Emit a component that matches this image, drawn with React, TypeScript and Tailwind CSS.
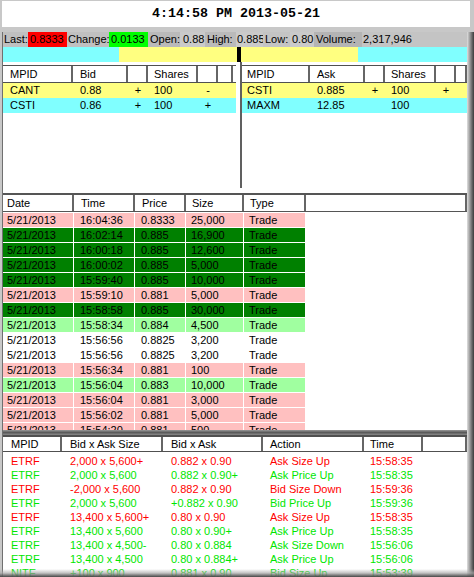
import React from "react";

// Level 1 / book / time & sales / level 2 monitor window

const PINK = "bg-[#ffc0c0]";
const DKGREEN = "bg-[#008000]";
const LTGREEN = "bg-[#a0ffa0]";
const WHITE = "bg-white";

const QUOTE = [
  { t: "Last:", w: "w-[25px]", bg: "bg-[#c0c0c0]", pl: "pl-[1px]" },
  { t: "0.8333", w: "w-[39px]", bg: "bg-[#ff0000]", pl: "pl-[2px]" },
  { t: "Change:", w: "w-[42px]", bg: "bg-[#c0c0c0]", pl: "pl-[1px]" },
  { t: "0.0133", w: "w-[39px]", bg: "bg-[#00ff00]", pl: "pl-[2px]" },
  { t: "Open:", w: "w-[32px]", bg: "bg-[#bababa]", pl: "pl-[2px]" },
  { t: "0.88", w: "w-[25px]", bg: "bg-[#cacaca]", pl: "pl-[3px]" },
  { t: "High:", w: "w-[31px]", bg: "bg-[#bababa]", pl: "pl-[2px]" },
  { t: "0.885", w: "w-[27px]", bg: "bg-[#cacaca]", pl: "pl-[1px]" },
  { t: "Low:", w: "w-[27px]", bg: "bg-[#c4c4c4]", pl: "pl-[2px]" },
  { t: "0.80", w: "w-[24px]", bg: "bg-[#cacaca]", pl: "pl-[2px]" },
  { t: "Volume:", w: "w-[48px]", bg: "bg-[#b4b4b4]", pl: "pl-[2px]" },
  { t: "2,317,946", w: "flex-1", bg: "bg-[#c4c4c4]", pl: "pl-[1px]" },
];

type BookRow = { mpid: string; price: string; a: string; shares: string; b: string; bg: string };

const BIDS: BookRow[] = [
  { mpid: "CANT", price: "0.88", a: "+", shares: "100", b: "-", bg: "bg-[#ffff80]" },
  { mpid: "CSTI", price: "0.86", a: "+", shares: "100", b: "+", bg: "bg-[#80ffff]" },
];

const ASKS: BookRow[] = [
  { mpid: "CSTI", price: "0.885", a: "+", shares: "100", b: "+", bg: "bg-[#ffff80]" },
  { mpid: "MAXM", price: "12.85", a: "", shares: "100", b: "", bg: "bg-[#80ffff]" },
];

const TRADES = [
  { time: "16:04:36", price: "0.8333", size: "25,000", bg: PINK },
  { time: "16:02:14", price: "0.885", size: "16,900", bg: DKGREEN },
  { time: "16:00:18", price: "0.885", size: "12,600", bg: DKGREEN },
  { time: "16:00:02", price: "0.885", size: "5,000", bg: DKGREEN },
  { time: "15:59:40", price: "0.885", size: "10,000", bg: DKGREEN },
  { time: "15:59:10", price: "0.881", size: "5,000", bg: PINK },
  { time: "15:58:58", price: "0.885", size: "30,000", bg: DKGREEN },
  { time: "15:58:34", price: "0.884", size: "4,500", bg: LTGREEN },
  { time: "15:56:56", price: "0.8825", size: "3,200", bg: WHITE },
  { time: "15:56:56", price: "0.8825", size: "3,200", bg: WHITE },
  { time: "15:56:34", price: "0.881", size: "100", bg: PINK },
  { time: "15:56:04", price: "0.883", size: "10,000", bg: LTGREEN },
  { time: "15:56:04", price: "0.881", size: "3,000", bg: PINK },
  { time: "15:56:02", price: "0.881", size: "5,000", bg: PINK },
  { time: "15:54:20", price: "0.881", size: "500", bg: PINK },
];

const RED = "text-[#ff0000]";
const GRN = "text-[#00e600]";

const LEVEL2 = [
  { c: RED, id: "ETRF", size: "2,000 x 5,600+", px: "0.882 x 0.90", act: "Ask Size Up", t: "15:58:35" },
  { c: GRN, id: "ETRF", size: "2,000 x 5,600", px: "0.882 x 0.90+", act: "Ask Price Up", t: "15:58:35" },
  { c: RED, id: "ETRF", size: "-2,000 x 5,600", px: "0.882 x 0.90", act: "Bid Size Down", t: "15:59:36" },
  { c: GRN, id: "ETRF", size: "2,000 x 5,600", px: "+0.882 x 0.90", act: "Bid Price Up", t: "15:59:36" },
  { c: RED, id: "ETRF", size: "13,400 x 5,600+", px: "0.80 x 0.90", act: "Ask Size Up", t: "15:58:35" },
  { c: GRN, id: "ETRF", size: "13,400 x 5,600", px: "0.80 x 0.90+", act: "Ask Price Up", t: "15:58:35" },
  { c: GRN, id: "ETRF", size: "13,400 x 4,500-", px: "0.80 x 0.884", act: "Ask Size Down", t: "15:56:06" },
  { c: GRN, id: "ETRF", size: "13,400 x 4,500", px: "0.80 x 0.884+", act: "Ask Price Up", t: "15:56:06" },
  { c: GRN, id: "NITE", size: "+100 x 900", px: "0.881 x 0.90", act: "Bid Size Up", t: "15:53:39" },
];

function Head({ children, className = "" }: { children?: React.ReactNode; className?: string }) {
  return (
    <div className={`flex items-center border-r-2 border-[#666666] overflow-hidden whitespace-nowrap ${className}`}>
      {children}
    </div>
  );
}

function BookPanel({ title, rows, cols, first }: { title: string; rows: BookRow[]; cols: string; first: string }) {
  return (
    <div className="h-full flex flex-col">
      <div className={`grid ${cols} h-[18px] border-y border-[#505050]`}>
        <Head className={first}>MPID</Head>
        <Head className="pl-[7px]">{title}</Head>
        <Head />
        <Head className="pl-[6px]">Shares</Head>
        <Head />
        <Head />
      </div>
      {rows.map((r, i) => (
        <div key={i} className={`grid ${cols} h-[15px] items-center ${r.bg}`}>
          <div className={first}>{r.mpid}</div>
          <div className="pl-[7px]">{r.price}</div>
          <div className="text-center">{r.a}</div>
          <div className="pl-[6px]">{r.shares}</div>
          <div className="text-center">{r.b}</div>
          <div />
        </div>
      ))}
    </div>
  );
}

export default function App() {
  return (
    <div className="relative w-[474px] h-[577px] overflow-hidden bg-[#c8c8c8] text-[11px] leading-none text-black font-['Liberation_Sans',Arial,sans-serif]">
      {/* clock */}
      <div className="ml-[2px] mr-[4px] mt-[1px] h-[26px] bg-white flex items-center justify-center font-['Liberation_Mono','Courier_New',monospace] font-bold text-[13.33px]">
        4:14:58 PM 2013-05-21
      </div>
      <div className="h-[5px]" />

      <div className="flex h-[545px]">
        <div className="w-[2px]" />
        <div className="flex-1 min-w-0 flex flex-col border-l border-[#707070] bg-white overflow-hidden">
          {/* quote bar */}
          <div className="flex h-[15px] shrink-0">
            {QUOTE.map((q, i) => (
              <div key={i} className={`flex items-center whitespace-nowrap ${q.w} ${q.bg} ${q.pl}`}>
                {q.t}
              </div>
            ))}
          </div>

          {/* bid / ask pressure bar */}
          <div className="flex h-[15px] shrink-0">
            <div className="w-[116px] bg-[#80ffff]" />
            <div className="w-[118px] bg-[#ffff80]" />
            <div className="w-[4px] bg-black" />
            <div className="w-[117px] bg-[#ffff80]" />
            <div className="flex-1 bg-[#80ffff]" />
          </div>

          {/* order book */}
          <div className="flex h-[131px] shrink-0 pb-[5px]">
            <div className="w-[237px] pt-[3px] pr-[4px]">
              <BookPanel
                title="Bid"
                rows={BIDS}
                cols="grid-cols-[70px_55px_20px_50px_20px_15px]"
                first="pl-[7px]"
              />
            </div>
            <div className="flex-1 border-l-2 border-[#606060] pt-[3px]">
              <BookPanel
                title="Ask"
                rows={ASKS}
                cols="grid-cols-[68px_55px_20px_51px_20px_11px]"
                first="pl-[5px]"
              />
            </div>
          </div>

          {/* time & sales */}
          <div className="flex flex-col h-[237px] shrink-0 overflow-hidden">
            <div className="grid grid-cols-[71px_61px_51px_58px_62px_1fr] h-[19px] shrink-0 border-t-2 border-b border-[#555555]">
              <Head className="pl-[4px]">Date</Head>
              <Head className="pl-[7px]">Time</Head>
              <Head className="pl-[7px]">Price</Head>
              <Head className="pl-[6px]">Size</Head>
              <Head className="pl-[6px]">Type</Head>
              <Head className="border-r-0" />
            </div>
            <div className="pt-[1px] flex flex-col gap-y-px overflow-hidden">
              {TRADES.map((t, i) => (
                <div key={i} className="grid grid-cols-[70px_60px_50px_57px_61px] gap-x-px w-[302px] h-[14px] shrink-0">
                  <div className={`flex items-center pl-[4px] ${t.bg}`}>5/21/2013</div>
                  <div className={`flex items-center pl-[6px] ${t.bg}`}>{t.time}</div>
                  <div className={`flex items-center pl-[6px] ${t.bg}`}>{t.price}</div>
                  <div className={`flex items-center pl-[5px] ${t.bg}`}>{t.size}</div>
                  <div className={`flex items-center pl-[5px] ${t.bg}`}>Trade</div>
                </div>
              ))}
            </div>
          </div>

          {/* splitter */}
          <div className="h-[5px] shrink-0 bg-gradient-to-b from-[#9a9a9a] via-[#5a5a5a] to-[#8a8a8a]" />

          {/* level 2 activity */}
          <div className="flex flex-col flex-1 min-h-0 overflow-hidden">
            <div className="grid grid-cols-[59px_101px_100px_101px_59px_1fr] h-[17px] shrink-0 border-t-2 border-b border-[#505050]">
              <Head className="pl-[8px]">MPID</Head>
              <Head className="pl-[8px]">Bid x Ask Size</Head>
              <Head className="pl-[8px]">Bid x Ask</Head>
              <Head className="pl-[7px]">Action</Head>
              <Head className="pl-[6px]">Time</Head>
              <Head className="border-r-0" />
            </div>
            <div className="pt-[2px] flex flex-col">
              {LEVEL2.map((r, i) => (
                <div key={i} className={`grid grid-cols-[59px_101px_100px_101px_59px] h-[14px] shrink-0 items-center ${r.c}`}>
                  <div className="pl-[8px]">{r.id}</div>
                  <div className="pl-[8px]">{r.size}</div>
                  <div className="pl-[8px]">{r.px}</div>
                  <div className="pl-[7px]">{r.act}</div>
                  <div className="pl-[6px]">{r.t}</div>
                </div>
              ))}
            </div>
          </div>
        </div>
        {/* right 3D frame edge */}
        <div className="w-[7px] bg-gradient-to-r from-[#e0e0e0] via-[#8c8c8c] to-[#3c3c3c]" />
      </div>

      {/* bottom 3D frame edge, drawn over the last row */}
      <div className="absolute bottom-0 left-0 right-0 h-[8px] bg-gradient-to-b from-[#ffffff00] via-[#a8a8a8b0] to-[#484848]" />
    </div>
  );
}
